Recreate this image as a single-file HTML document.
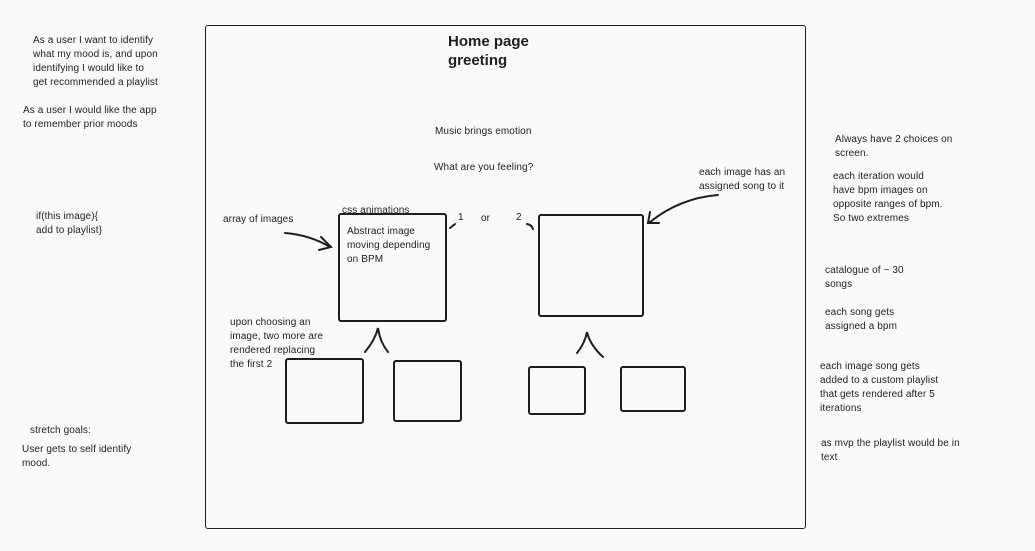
<!DOCTYPE html>
<html><head><style>
body{margin:0;width:1035px;height:551px;background:#fafafa;position:relative;overflow:hidden;font-family:"Liberation Sans",sans-serif;color:#1e1e1e}
.t{position:absolute;font-size:10px;line-height:14px;white-space:pre;letter-spacing:0.1px}
.h{position:absolute;font-size:15px;line-height:19px;font-weight:bold;white-space:pre}
.b{position:absolute;border:2px solid #1e1e1e;border-radius:3px;box-sizing:border-box}
</style></head><body>
<div class="b" style="left:205px;top:25px;width:601px;height:504px;border-width:1.5px"></div>
<div class="h" style="left:448px;top:32px">Home page
greeting</div>
<div class="t" style="left:33px;top:34px">As a user I want to identify
what my mood is, and upon
identifying I would like to
get recommended a playlist</div>
<div class="t" style="left:23px;top:104px">As a user I would like the app
to remember prior moods</div>
<div class="t" style="left:36px;top:210px">if(this image){
add to playlist}</div>
<div class="t" style="left:30px;top:424px">stretch goals:</div>
<div class="t" style="left:22px;top:443px">User gets to self identify
mood.</div>
<div class="t" style="left:435px;top:125px">Music brings emotion</div>
<div class="t" style="left:434px;top:161px">What are you feeling?</div>
<div class="t" style="left:699px;top:166px">each image has an
assigned song to it</div>
<div class="t" style="left:223px;top:213px">array of images</div>
<div class="t" style="left:342px;top:205px;line-height:11px">css animations</div>
<div class="t" style="left:458px;top:211px">1</div>
<div class="t" style="left:481px;top:212px">or</div>
<div class="t" style="left:516px;top:211px">2</div>
<div class="t" style="left:347px;top:225px">Abstract image
moving depending
on BPM</div>
<div class="t" style="left:230px;top:316px">upon choosing an
image, two more are
rendered replacing
the first 2</div>
<div class="t" style="left:835px;top:133px">Always have 2 choices on
screen.</div>
<div class="t" style="left:833px;top:170px">each iteration would
have bpm images on
opposite ranges of bpm.
So two extremes</div>
<div class="t" style="left:825px;top:264px">catalogue of ~ 30
songs</div>
<div class="t" style="left:825px;top:306px">each song gets
assigned a bpm</div>
<div class="t" style="left:820px;top:360px">each image song gets
added to a custom playlist
that gets rendered after 5
iterations</div>
<div class="t" style="left:821px;top:437px">as mvp the playlist would be in
text</div>
<div class="b" style="left:338px;top:213px;width:109px;height:109px"></div>
<div class="b" style="left:538px;top:214px;width:106px;height:103px"></div>
<div class="b" style="left:285px;top:358px;width:79px;height:66px"></div>
<div class="b" style="left:393px;top:360px;width:69px;height:62px"></div>
<div class="b" style="left:528px;top:366px;width:58px;height:49px"></div>
<div class="b" style="left:620px;top:366px;width:66px;height:46px"></div>
<svg width="1035" height="551" style="position:absolute;left:0;top:0" fill="none" stroke="#1e1e1e" stroke-width="2" stroke-linecap="round">
<path d="M285 233 Q310 235 330 247"/><path d="M321 237 L331 247 L319 250"/>
<path d="M718 195 Q680 198 650 222"/><path d="M650 212 L648 223 L659 223"/>
<path d="M450 228 L455 224"/><path d="M527 224 Q532 225 533 229"/>
<path d="M365 352 Q375 340 378 328 Q380 342 388 352"/>
<path d="M577 353 Q585 343 587 332 Q590 345 603 357"/>
</svg>
</body></html>
